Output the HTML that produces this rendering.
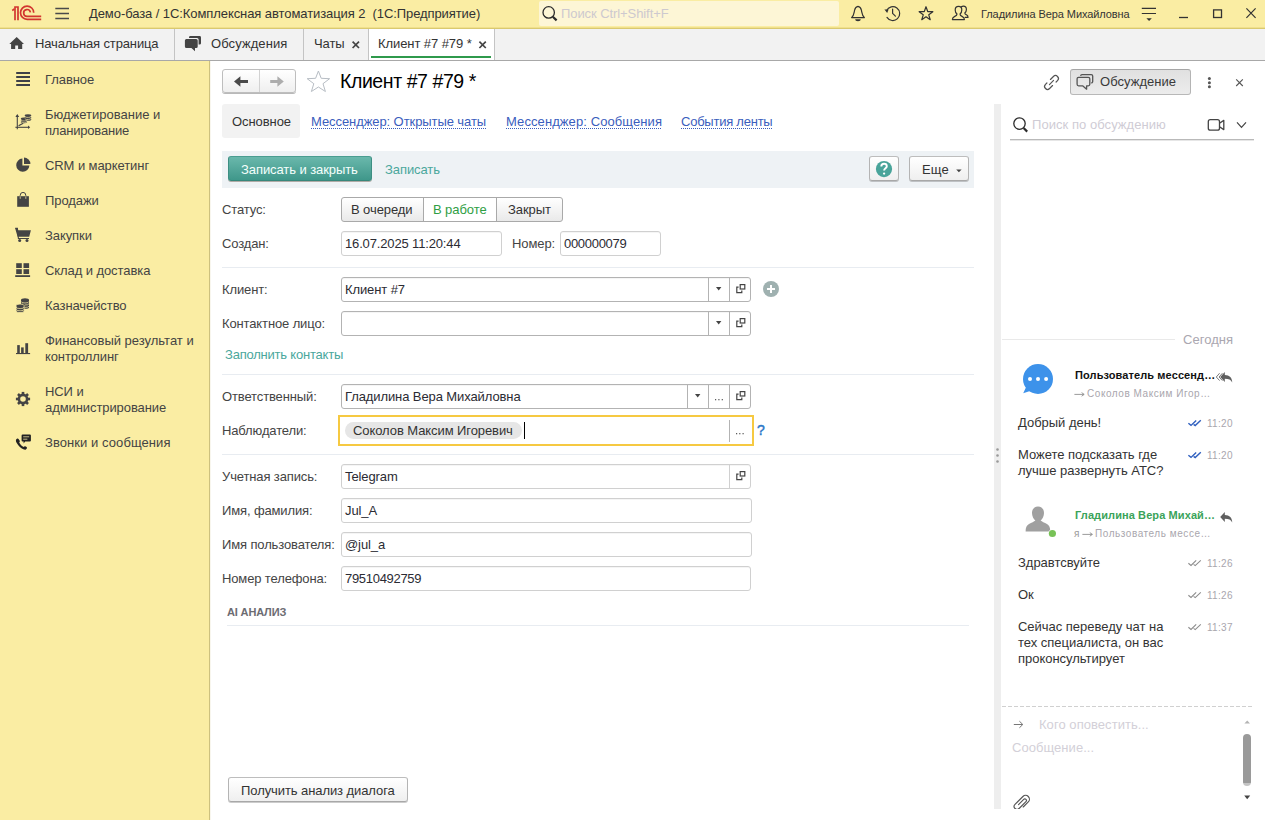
<!DOCTYPE html>
<html lang="ru">
<head>
<meta charset="utf-8">
<title>Клиент #7 #79 *</title>
<style>
*{box-sizing:border-box;margin:0;padding:0}
html,body{width:1265px;height:820px;overflow:hidden;background:#fff}
body{position:relative;font-family:"Liberation Sans",sans-serif;font-size:13px;color:#333;line-height:16px}
.abs{position:absolute}
.t{position:absolute;white-space:nowrap}
svg{position:absolute;overflow:visible}

/* ===== top bar ===== */
#topbar{left:0;top:0;width:1265px;height:29px;background:#faeda3;border-bottom:1px solid #d9c970;box-shadow:inset 0 -1px 0 #f0e08c}
#topsearch{left:539px;top:1px;width:300px;height:25px;background:#fdf6d6;border-radius:2px}
/* ===== tab bar ===== */
#tabbar{left:0;top:29px;width:1265px;height:32px;background:#f2f2f2;border-bottom:1px solid #a8a8a8}
.tsep{position:absolute;top:29px;width:1px;height:31px;background:#c4c4c4}
#acttab{left:369px;top:29px;width:125px;height:31px;background:#fff}
#actline{left:371px;top:56px;width:120px;height:2px;background:#2f9a4c}
/* ===== sidebar ===== */
#sidebar{left:0;top:61px;width:210px;height:759px;background:#faeda3;border-right:1px solid #cdc17e}
.sb{position:absolute;left:45px;white-space:nowrap;color:#444;font-size:13px;line-height:16px}

/* ===== main ===== */
body{letter-spacing:-0.08px}
#leftedge{left:210px;top:61px;width:1px;height:759px;background:#f8f6ee}
.btn{position:absolute;border:1px solid #b0b0b0;border-radius:3px;background:linear-gradient(#ffffff,#efefef);box-shadow:0 1px 0 rgba(0,0,0,.2);color:#333;text-align:center;white-space:nowrap}
.inp{position:absolute;height:25px;border:1px solid #b3b3b3;border-radius:3px;background:#fff;box-shadow:inset 0 1px 0 rgba(0,0,0,.04)}
.inp.ro{border-color:#d0d0d0}
.inp .v{position:absolute;left:3px;top:4px;white-space:nowrap;color:#2b2b33;letter-spacing:-0.1px}
.inp .d{position:absolute;top:0;width:1px;height:23px;background:#b3b3b3}
.lbl{position:absolute;left:222px;white-space:nowrap;color:#444;letter-spacing:-0.13px}
.hr{position:absolute;left:222px;width:752px;height:1px;background:#e8ecf1}
.nav{position:absolute;top:114px;white-space:nowrap;color:#3a5dbd;line-height:16px;text-decoration:underline dotted #3a5dbd;text-decoration-thickness:1px;text-underline-offset:1.5px}

/* ===== discussion panel ===== */
.p{position:absolute;white-space:nowrap;letter-spacing:0.05px}
.msg{position:absolute;left:1018px;color:#333;letter-spacing:-0.02px;line-height:16px;white-space:nowrap}
.tm{position:absolute;left:1207px;font-size:10px;color:#a9a6ad;white-space:nowrap;letter-spacing:0.3px;line-height:13px}
.sub{position:absolute;font-size:10px;color:#a9a6ad;white-space:nowrap;line-height:13px;letter-spacing:0.55px}
.nm{position:absolute;left:1075px;font-size:11px;font-weight:bold;white-space:nowrap;line-height:14px;letter-spacing:0.1px}
</style>
</head>
<body>

<!-- ================= TOP BAR ================= -->
<div class="abs" id="topbar"></div>
<div class="abs" id="topsearch"></div>
<div class="t" style="left:89px;top:6px;font-size:13px;color:#333;white-space:pre">Демо-база / 1С:Комплексная автоматизация 2  (1С:Предприятие)</div>
<div class="t" style="left:561px;top:6px;color:#cdc9cf">Поиск Ctrl+Shift+F</div>
<div class="t" style="left:981px;top:7px;font-size:11px;color:#333;line-height:14px">Гладилина Вера Михайловна</div>

<!-- ================= TAB BAR ================= -->
<div class="abs" id="tabbar"></div>
<div class="abs" id="acttab"></div>
<div class="abs" id="actline"></div>
<div class="tsep" style="left:174px"></div>
<div class="tsep" style="left:303px"></div>
<div class="tsep" style="left:368px"></div>
<div class="tsep" style="left:494px"></div>
<div class="t" style="left:35px;top:36px;color:#333;letter-spacing:-0.13px">Начальная страница</div>
<div class="t" style="left:211px;top:36px;color:#333;letter-spacing:0.08px">Обсуждения</div>
<div class="t" style="left:314px;top:36px;color:#333">Чаты</div>
<div class="t" style="left:378px;top:36px;color:#333">Клиент #7 #79 *</div>

<!-- ================= SIDEBAR ================= -->
<div class="abs" id="sidebar"></div>
<div class="sb" style="top:72px">Главное</div>
<div class="sb" style="top:107px;letter-spacing:0">Бюджетирование и<br><span style="letter-spacing:-0.2px">планирование</span></div>
<div class="sb" style="top:158px">CRM и маркетинг</div>
<div class="sb" style="top:193px">Продажи</div>
<div class="sb" style="top:228px">Закупки</div>
<div class="sb" style="top:263px">Склад и доставка</div>
<div class="sb" style="top:298px">Казначейство</div>
<div class="sb" style="top:333px;letter-spacing:-0.01px">Финансовый результат и<br><span style="letter-spacing:-0.1px">контроллинг</span></div>
<div class="sb" style="top:384px">НСИ и<br>администрирование</div>
<div class="sb" style="top:435px;letter-spacing:0.07px">Звонки и сообщения</div>

<!-- ================= MAIN FORM ================= -->
<div class="abs" id="leftedge"></div>
<!-- back/forward -->
<div class="btn" style="left:222px;top:69px;width:74px;height:24px;border-color:#bebebe;box-shadow:0 1px 0 #b9b9b9"></div>
<div class="abs" style="left:259px;top:70px;width:1px;height:22px;background:#d2d2d2"></div>
<div class="t" style="left:340px;top:70px;font-size:19.5px;line-height:22px;color:#000;letter-spacing:-0.42px">Клиент #7 #79 *</div>

<!-- section tabs -->
<div class="abs" style="left:222px;top:104px;width:78px;height:34px;background:#f2f2f2;border-radius:3px"></div>
<div class="t" style="left:232px;top:114px;color:#333">Основное</div>
<div class="nav" style="left:311px">Мессенджер: Открытые чаты</div>
<div class="nav" style="left:506px;letter-spacing:0.09px">Мессенджер: Сообщения</div>
<div class="nav" style="left:681px;letter-spacing:-0.24px">События ленты</div>

<!-- command bar -->
<div class="abs" style="left:222px;top:151px;width:752px;height:37px;background:#eef2f5"></div>
<div class="btn" style="left:228px;top:156px;width:144px;height:25px;border-color:#4a9d91 #3d8f83 #37877b;background:linear-gradient(#6ab8ac,#3f978a);box-shadow:0 1px 0 rgba(60,40,20,.35)"></div>
<div class="t" style="left:241px;top:162px;color:#f4fffc">Записать и закрыть</div>
<div class="t" style="left:385px;top:162px;color:#4aa79c">Записать</div>
<div class="btn" style="left:869px;top:156px;width:30px;height:25px;border-color:#bdbdbd #b4b4b4 #a8a8a8"></div>
<div class="btn" style="left:909px;top:156px;width:60px;height:25px;border-color:#bdbdbd #b4b4b4 #a8a8a8"></div>
<div class="t" style="left:922px;top:162px;color:#333;letter-spacing:0.1px">Еще</div>

<!-- status -->
<div class="lbl" style="top:202px">Статус:</div>
<div class="btn" style="left:341px;top:197px;width:222px;height:25px;border-color:#a9a9a9;box-shadow:none;background:linear-gradient(#ffffff,#e9e9e9)"></div>
<div class="abs" style="left:423px;top:198px;width:74px;height:23px;background:#fff;border-left:1px solid #a9a9a9;border-right:1px solid #a9a9a9"></div>
<div class="t" style="left:351px;top:202px;color:#333">В очереди</div>
<div class="t" style="left:433px;top:202px;color:#2f9e44">В работе</div>
<div class="t" style="left:508px;top:202px;color:#333">Закрыт</div>

<div class="lbl" style="top:236px">Создан:</div>
<div class="inp ro" style="left:341px;top:231px;width:161px"><span class="v" style="letter-spacing:-0.15px">16.07.2025 11:20:44</span></div>
<div class="t" style="left:512px;top:236px;color:#444">Номер:</div>
<div class="inp ro" style="left:560px;top:231px;width:101px"><span class="v" style="letter-spacing:-0.3px;left:3px">000000079</span></div>

<div class="hr" style="top:267px"></div>

<div class="lbl" style="top:282px">Клиент:</div>
<div class="inp" style="left:341px;top:277px;width:410px"><span class="v">Клиент #7</span><i class="d" style="left:366px"></i><i class="d" style="left:387px"></i></div>
<div class="lbl" style="top:316px">Контактное лицо:</div>
<div class="inp" style="left:341px;top:311px;width:410px"><i class="d" style="left:366px"></i><i class="d" style="left:387px"></i></div>
<div class="t" style="left:225px;top:347px;color:#4aa79c;letter-spacing:-0.21px">Заполнить контакты</div>

<div class="hr" style="top:374px"></div>

<div class="lbl" style="top:389px">Ответственный:</div>
<div class="inp" style="left:341px;top:384px;width:410px"><span class="v">Гладилина Вера Михайловна</span><i class="d" style="left:345px"></i><i class="d" style="left:366px"></i><i class="d" style="left:387px"></i></div>

<div class="lbl" style="top:423px">Наблюдатели:</div>
<div class="abs" style="left:338px;top:415px;width:416px;height:31px;border:2px solid #f6c941;background:#fff"></div>
<div class="abs" style="left:345px;top:422px;width:177px;height:17px;border-radius:9px;background:#e6e6e6"></div>
<div class="t" style="left:353px;top:423px;color:#333">Соколов Максим Игоревич</div>
<div class="abs" style="left:524px;top:422px;width:1px;height:17px;background:#000"></div>
<div class="abs" style="left:729px;top:420px;width:1px;height:22px;background:#b3b3b3"></div>
<div class="t" style="left:757px;top:422px;color:#2d78c8;font-size:14px;-webkit-text-stroke:0.45px #2d78c8">?</div>

<div class="hr" style="top:454px"></div>

<div class="lbl" style="top:469px">Учетная запись:</div>
<div class="inp ro" style="left:341px;top:464px;width:410px"><span class="v">Telegram</span><i class="d" style="left:387px;background:#d0d0d0"></i></div>
<div class="lbl" style="top:503px">Имя, фамилия:</div>
<div class="inp ro" style="left:341px;top:498px;width:411px"><span class="v">Jul_A</span></div>
<div class="lbl" style="top:537px">Имя пользователя:</div>
<div class="inp ro" style="left:341px;top:532px;width:411px"><span class="v">@jul_a</span></div>
<div class="lbl" style="top:571px">Номер телефона:</div>
<div class="inp ro" style="left:341px;top:566px;width:410px"><span class="v" style="letter-spacing:-0.3px">79510492759</span></div>

<div class="t" style="left:227px;top:604px;font-size:11px;font-weight:bold;color:#6c6c72;letter-spacing:-0.15px">AI АНАЛИЗ</div>
<div class="abs" style="left:227px;top:625px;width:742px;height:1px;background:#e8ecf1"></div>

<div class="btn" style="left:228px;top:777px;width:180px;height:25px;border-color:#bdbdbd #b4b4b4 #a8a8a8"></div>
<div class="t" style="left:241px;top:783px;color:#333">Получить анализ диалога</div>

<!-- splitter -->
<div class="abs" style="left:994px;top:104px;width:7px;height:705px;background:#eeeeee"></div>


<!-- ================= DISCUSSION PANEL ================= -->
<div class="btn" style="left:1070px;top:69px;width:121px;height:26px;background:linear-gradient(#e0e0e0,#ececec);border-color:#a6a6a6 #b4b4b4 #b8b8b8;box-shadow:none"></div>
<div class="t" style="left:1100px;top:74px;color:#3a3a3a;font-size:13px;letter-spacing:0.03px">Обсуждение</div>

<div class="p" style="left:1032px;top:117px;color:#cfccd5;font-size:13px">Поиск по обсуждению</div>
<div class="abs" style="left:1010px;top:139px;width:244px;height:1px;background:#b9b9b9;box-shadow:0 1px 0 #e6e6e6"></div>

<div class="abs" style="left:1002px;top:339px;width:173px;height:1px;background:#e9e9e9"></div>
<div class="p" style="left:1183px;top:332px;color:#aaa7b0">Сегодня</div>

<div class="nm" style="top:368px;color:#111">Пользователь мессенд…</div>
<div class="sub" style="top:387px;left:1087px">Соколов Максим Игор…</div>
<div class="msg" style="top:415px">Добрый день!</div>
<div class="tm" style="top:417px">11:20</div>
<div class="msg" style="top:447px">Можете подсказать где<br>лучше развернуть АТС?</div>
<div class="tm" style="top:449px">11:20</div>

<div class="nm" style="top:508px;color:#3aa35a">Гладилина Вера Михай…</div>
<div class="sub" style="top:527px;left:1074px;color:#9a9a9a">я</div><div class="sub" style="top:527px;left:1095px">Пользователь мессе…</div>
<div class="msg" style="top:555px">Здравтсвуйте</div>
<div class="tm" style="top:557px">11:26</div>
<div class="msg" style="top:587px">Ок</div>
<div class="tm" style="top:589px">11:26</div>
<div class="msg" style="top:619px">Сейчас переведу чат на<br>тех специалиста, он вас<br>проконсультирует</div>
<div class="tm" style="top:621px">11:37</div>

<div class="abs" style="left:1002px;top:706px;width:250px;height:1px;background:repeating-linear-gradient(90deg,#d0d0d0 0 4px,transparent 4px 6px)"></div>
<div class="p" style="left:1039px;top:717px;color:#d3d0d8">Кого оповестить...</div>
<div class="p" style="left:1012px;top:740px;color:#d3d0d8">Сообщение...</div>
<div class="abs" style="left:1243px;top:734px;width:8px;height:52px;border-radius:4px;background:linear-gradient(#9a9a9a 0,#9a9a9a 94%,#c4c4c4 94%)"></div>

<!-- ================= ICONS: top bar / tab bar / sidebar ================= -->
<svg id="ic1" style="left:0;top:0" width="1265" height="820" viewBox="0 0 1265 820" fill="none">
<!-- 1C logo -->
<g stroke="#d2362f" stroke-width="1.7" fill="none" stroke-linejoin="miter">
  <path d="M12.2 10.4 L14.4 9.1"/>
  <path d="M15 20.2 V7 H18 V20.2"/>
  <path d="M33.7 12.7 A6.6 6.6 0 1 0 27.2 19.3 H41.2"/>
  <path d="M30.4 12.3 A3.4 3.4 0 1 0 27.2 16.3 H41.2"/>
</g>
<!-- hamburger -->
<g stroke="#4a4a4a" stroke-width="1.3"><path d="M55.3 8.5H69M55.3 13.5H69M55.3 18.5H69"/></g>
<!-- search magnifier -->
<circle cx="548.7" cy="12.4" r="5.7" stroke="#2b2b2b" stroke-width="1.3"/>
<path d="M552.8 16.8 L556.6 20.4" stroke="#2b2b2b" stroke-width="2.2"/>
<!-- bell -->
<g stroke="#333" stroke-width="1.2" stroke-linejoin="round" stroke-linecap="round">
  <path d="M851.6 17.6 C854.2 15.2 854.0 12.6 854.6 10.2 C855.2 7.6 856.6 6.6 858 6.4 C859.4 6.6 860.8 7.6 861.4 10.2 C862 12.6 861.8 15.2 864.4 17.6 Z"/>
</g>
<path d="M855.2 19.3 H860.8 A2.8 1.9 0 0 1 855.2 19.3 Z" fill="#333"/>
<!-- history -->
<g stroke="#333" stroke-width="1.2" stroke-linecap="round" stroke-linejoin="round">
  <path d="M886.6 10.6 A6.9 6.9 0 1 1 887 17.4"/>
  <path d="M892.6 9 V13.4 L895.4 16.2"/>
</g>
<path d="M884.4 9.6 L888.6 9.4 L887.2 13 Z" fill="#333"/>
<!-- star -->
<path d="M926 6.7 L927.7 11.55 L932.85 11.68 L928.76 14.8 L930.23 19.72 L926 16.8 L921.77 19.72 L923.24 14.8 L919.15 11.68 L924.3 11.55 Z" stroke="#333" stroke-width="1.2" stroke-linejoin="round"/>
<!-- users -->
<g stroke="#333" stroke-width="1.2" stroke-linejoin="round" stroke-linecap="round">
  <path d="M958.6 6.4 C956.4 6.4 955.2 8 955.2 10 C955.2 11.8 956 13.2 957 14 C957.2 15.4 955.8 16 954.4 16.6 C953 17.2 952.4 18 952.4 19.6 H964.4 C964.4 18 963.8 17.2 962.4 16.6 C961 16 959.8 15.4 960 14 C961 13.2 961.8 11.8 961.8 10 C961.8 8 960.8 6.4 958.6 6.4 Z"/>
  <path d="M961.4 6.8 C962 6.3 962.8 6.2 963.4 6.2 C965.4 6.2 966.4 7.6 966.4 9.4 C966.4 11 965.8 12.2 964.8 13 C964.8 14.2 965.8 14.6 966.8 15 C967.6 15.4 968 16.2 968 17.4 H965.2"/>
</g>
<!-- menu lines + caret -->
<g stroke="#333" stroke-width="1.2"><path d="M1141.8 8.4H1156M1141.8 13.5H1156"/></g>
<path d="M1146.4 18.2 H1151.8 L1149.1 21 Z" fill="#333"/>
<!-- window controls -->
<path d="M1179 17.5 H1188" stroke="#333" stroke-width="1.3"/>
<rect x="1213.6" y="9.9" width="7.9" height="7.6" stroke="#333" stroke-width="1.3"/>
<path d="M1246.4 8.4 L1255.6 17.8 M1255.6 8.4 L1246.4 17.8" stroke="#333" stroke-width="1.2"/>

<!-- home -->
<path d="M16.7 37 L24 43.9 H22.2 V48.9 H18.1 V45.4 H15.2 V48.9 H11.1 V43.9 H9.3 Z" fill="#444"/>
<!-- discussions -->
<path d="M190.4 36 H199.6 A1.4 1.4 0 0 1 201 37.4 V43.2 A1.4 1.4 0 0 1 199.6 44.6 H198.6 V39.6 A1.6 1.6 0 0 0 197 38 H189 V37.4 A1.4 1.4 0 0 1 190.4 36 Z" fill="#444"/>
<path d="M186.4 39.1 H196.2 A1.5 1.5 0 0 1 197.7 40.6 V46.4 A1.5 1.5 0 0 1 196.2 47.9 H195 V51.3 L191.4 47.9 H186.4 A1.5 1.5 0 0 1 184.9 46.4 V40.6 A1.5 1.5 0 0 1 186.4 39.1 Z" fill="#444"/>
<!-- tab close marks -->
<g stroke="#444" stroke-width="1.7"><path d="M352.6 41.6 L359 48 M359 41.6 L352.6 48"/><path d="M479.4 41.6 L485.8 48 M485.8 41.6 L479.4 48"/></g>

<!-- sidebar: main (4 lines) -->
<g stroke="#3e4048" stroke-width="1.9"><path d="M16.2 73H30M16.2 77H30M16.2 81H30M16.2 85H30"/></g>
<!-- sidebar: budgeting -->
<g stroke="#444" stroke-width="1.1" fill="none">
  <path d="M17.3 129.2 V115.2"/><path d="M15.4 127.3 H28.6"/>
  <path d="M18.6 125.8 L23.2 123.2" stroke-width="1.3"/>
</g>
<path d="M15.4 117 L17.3 114 L19.2 117 Z M28 125.5 L30.2 127.3 L28 129.1 Z" fill="#444"/>
<g fill="#444"><ellipse cx="28" cy="115.500" rx="3.300" ry="1.300"/><ellipse cx="28" cy="117.500" rx="3.300" ry="1.300"/><ellipse cx="28" cy="119.400" rx="3.300" ry="1.300"/>
<ellipse cx="24" cy="118.800" rx="3.200" ry="1.200"/><ellipse cx="24" cy="120.600" rx="3.200" ry="1.200"/><ellipse cx="24" cy="122.200" rx="3.200" ry="1.100"/></g>
<g stroke="#faeda3" stroke-width="0.600" fill="none"><path d="M24.800 116.700 A3.300 1.300 0 0 0 31.200 116.200"/><path d="M24.800 118.700 A3.300 1.300 0 0 0 31.200 118.200"/><path d="M20.800 120 A3.200 1.200 0 0 0 27.200 119.500"/><path d="M20.800 121.700 A3.200 1.200 0 0 0 27.200 121.200"/></g>
<!-- sidebar: CRM pie -->
<path d="M22.4 158.6 A6.6 6.6 0 1 0 29.4 165.6 H22.4 Z" fill="#444"/>
<path d="M24 157.6 V164 H30.4 A6.4 6.4 0 0 0 24 157.6 Z" fill="#444"/>
<!-- sidebar: sales bag -->
<rect x="17.2" y="196.2" width="11.7" height="10.6" fill="#444"/>
<path d="M20.2 198.6 V195.4 A2.8 3 0 0 1 25.8 195.4 V198.6" stroke="#444" stroke-width="1" fill="none"/>
<path d="M20.2 198.8 V196.3 M25.8 198.8 V196.3" stroke="#d8cf9a" stroke-width="0.9"/>
<!-- sidebar: purchases cart -->
<path d="M15.2 228.4 H17.6 L18.2 230.2 H30.9 L29.2 236.7 H17.6 Z" fill="#444"/>
<path d="M15.2 228.4 H17.4 L18.4 238.5 H29" stroke="#444" stroke-width="1.1" fill="none"/>
<circle cx="19.7" cy="240.5" r="1.5" fill="#444"/><circle cx="27" cy="240.5" r="1.5" fill="#444"/>
<!-- sidebar: warehouse grid -->
<g fill="#444"><rect x="16.2" y="263.2" width="5.6" height="4.8"/><rect x="23.5" y="263.2" width="5.6" height="4.8"/><rect x="16.2" y="269.2" width="5.6" height="4.8"/><rect x="23.5" y="269.2" width="5.6" height="4.8"/><rect x="15.2" y="275.2" width="14.9" height="1.8"/></g>
<!-- sidebar: treasury coins -->
<g fill="#444">
 <path d="M21 299.8 A4 1.6 0 0 1 29 299.8 V307.2 A4 1.6 0 0 1 21 307.2 Z"/>
 <path d="M16.1 305.6 A4 1.6 0 0 1 24.1 305.6 V311 A4 1.6 0 0 1 16.1 311 Z" stroke="#faeda3" stroke-width="0.8"/>
</g>
<g stroke="#faeda3" stroke-width="0.7" fill="none"><path d="M21 301.4 A4 1.6 0 0 0 29 301.4"/><path d="M24.6 305 A4 1.6 0 0 0 29 303.8"/><path d="M24.6 307.4 A4 1.6 0 0 0 29 306.2"/><path d="M16.1 307 A4 1.6 0 0 0 24.1 307"/><path d="M16.1 309.2 A4 1.6 0 0 0 24.1 309.2"/></g>
<!-- sidebar: finance bars -->
<g fill="#444"><rect x="17.2" y="345.1" width="2.6" height="8.4"/><rect x="21.1" y="347.4" width="2.6" height="6.1"/><rect x="25.3" y="343.2" width="2.8" height="10.3"/><rect x="16" y="353" width="14.1" height="1.1"/></g>
<!-- sidebar: gear -->
<g transform="translate(23 399)">
 <circle r="4.1" stroke="#444" stroke-width="2.6" fill="none"/>
 <g fill="#444"><rect x="-1.3" y="-7.1" width="2.6" height="2.6"/><rect x="-1.3" y="4.5" width="2.6" height="2.6"/><rect x="-7.1" y="-1.3" width="2.6" height="2.6"/><rect x="4.5" y="-1.3" width="2.6" height="2.6"/>
 <g transform="rotate(45)"><rect x="-1.3" y="-7.1" width="2.6" height="2.6"/><rect x="-1.3" y="4.5" width="2.6" height="2.6"/><rect x="-7.1" y="-1.3" width="2.6" height="2.6"/><rect x="4.5" y="-1.3" width="2.6" height="2.6"/></g></g>
</g>
<!-- sidebar: calls & messages -->
<path d="M17.2 438.6 C15.6 439.4 15.6 441 16.6 442.8 C18.4 446 21 448.4 24 449.6 C25.4 450.1 26.4 449.4 27 448 C27.2 447.4 26.6 446.8 25.6 446.4 C24.8 446.1 24.2 446.2 23.8 446.9 C22 446.2 20 444.2 19.2 442.4 C19.9 442 20 441.4 19.6 440.6 C19.2 439.6 18.2 438.2 17.2 438.6 Z" fill="#222"/>
<path d="M22.6 434.4 H29.9 A1 1 0 0 1 30.9 435.4 V440.5 A1 1 0 0 1 29.9 441.5 H25.2 L23.6 443.4 V441.5 H22.6 A1 1 0 0 1 21.6 440.5 V435.4 A1 1 0 0 1 22.6 434.4 Z" fill="#222"/>
<path d="M23.2 436.8 H29.2 M23.2 439.2 H27.4" stroke="#d9cf96" stroke-width="0.9"/>
</svg>

<!-- ================= ICONS: main form ================= -->
<svg id="ic2" style="left:0;top:0" width="1265" height="820" viewBox="0 0 1265 820" fill="none">
<!-- back / forward arrows -->
<path d="M234 81.5 L240.4 76.3 V80 H248 V83 H240.4 V86.7 Z" fill="#4a4a4a"/>
<path d="M283.8 81.5 L277.4 76.3 V80 H270.2 V83 H277.4 V86.7 Z" fill="#adadad"/>
<!-- favorite star -->
<path d="M318.4 71 L321.2 78.3 L329.6 78.7 L323 83.7 L325.4 91.5 L318.4 87 L311.4 91.5 L313.8 83.7 L307.2 78.7 L315.6 78.3 Z" stroke="#b7bdc4" stroke-width="1" stroke-linejoin="miter"/>
<!-- help -->
<circle cx="884" cy="169.1" r="8.1" fill="#49a49a"/>
<path d="M881.3 166.4 C881.3 164.6 882.5 163.8 884 163.8 C885.6 163.8 886.8 164.7 886.8 166.2 C886.8 168.2 884.1 168.3 884.1 170.6" stroke="#fff" stroke-width="1.9" fill="none"/>
<circle cx="884.1" cy="173.6" r="1.15" fill="#fff"/>
<!-- more caret -->
<path d="M956.2 169.6 H961.6 L958.9 172.2 Z" fill="#444"/>
<!-- dropdown carets -->
<g fill="#444">
<path d="M716 287 H721.4 L718.7 290.4 Z"/>
<path d="M716 321 H721.4 L718.7 324.4 Z"/>
<path d="M695 394 H700.4 L697.7 397.4 Z"/>
</g>
<!-- open icons -->
<g stroke="#444" stroke-width="1.2" fill="none">
<g id="op"><rect x="740.2" y="284.6" width="4.6" height="4.4"/><path d="M738.6 287.2 H736.8 V292.6 H741.8 V290.6"/></g>
<use href="#op" y="34"/><use href="#op" y="107"/><use href="#op" y="187"/>
</g>
<!-- ellipsis dots -->
<g fill="#5c5c5c"><rect x="715" y="399" width="1.200" height="1.300"/><rect x="718.300" y="399" width="1.200" height="1.300"/><rect x="721.700" y="399" width="1.200" height="1.300"/>
<rect x="736" y="433" width="1.200" height="1.300"/><rect x="739.200" y="433" width="1.200" height="1.300"/><rect x="742.500" y="433" width="1.200" height="1.300"/></g>
<!-- add client -->
<circle cx="771" cy="289" r="8" fill="#9fb1b0"/>
<path d="M767 289 H775 M771 285 V293" stroke="#fff" stroke-width="2"/>
<!-- splitter dots -->
<g fill="#999"><circle cx="997.5" cy="449.5" r="1.3"/><circle cx="997.5" cy="455.5" r="1.3"/><circle cx="997.5" cy="461.5" r="1.3"/></g>
</svg>

<!-- ================= ICONS: discussion panel ================= -->
<svg id="ic3" style="left:0;top:0" width="1265" height="820" viewBox="0 0 1265 820" fill="none">
<!-- link -->
<g transform="translate(1051.5 82.5) rotate(-45)" stroke="#555" stroke-width="1.2" stroke-linecap="round">
  <path d="M1.4 -2.9 H5.6 A2.9 2.9 0 0 1 5.6 2.9 H3.6"/>
  <path d="M-1.4 2.9 H-5.6 A2.9 2.9 0 0 1 -5.6 -2.9 H-3.6"/>
  <path d="M-2.9 0 H2.9"/>
</g>
<!-- discussion button icon -->
<g stroke="#555" stroke-width="1.3" stroke-linejoin="round">
  <path d="M1080.6 75.8 A1.4 1.4 0 0 1 1082 74.6 H1091.2 A1.5 1.5 0 0 1 1092.7 76.1 V81.4 A1.5 1.5 0 0 1 1091.2 82.9"/>
  <path d="M1078.6 77.3 H1088.3 A1.5 1.5 0 0 1 1089.8 78.8 V84.3 A1.5 1.5 0 0 1 1088.3 85.8 H1086.6 V89.2 L1082.6 85.8 H1078.6 A1.5 1.5 0 0 1 1077.1 84.3 V78.8 A1.5 1.5 0 0 1 1078.6 77.3 Z"/>
</g>
<!-- kebab -->
<g fill="#555"><circle cx="1209.4" cy="78.6" r="1.5"/><circle cx="1209.4" cy="82.7" r="1.5"/><circle cx="1209.4" cy="86.8" r="1.5"/></g>
<!-- close -->
<path d="M1236.2 79.4 L1242.8 86 M1242.8 79.4 L1236.2 86" stroke="#555" stroke-width="1.1"/>
<!-- panel search magnifier -->
<circle cx="1019.5" cy="123.6" r="5.7" stroke="#2b2b2b" stroke-width="1.3"/>
<path d="M1023.6 128 L1027.2 131.6" stroke="#2b2b2b" stroke-width="2.2"/>
<!-- video -->
<g stroke="#444" stroke-width="1.3" stroke-linejoin="round">
  <rect x="1208.3" y="119.7" width="11.2" height="10.5" rx="2"/>
  <path d="M1219.5 123.2 L1223.8 120.4 V129.6 L1219.5 126.8"/>
</g>
<!-- chevron -->
<path d="M1237 122.4 L1241.5 127.4 L1246 122.4" stroke="#444" stroke-width="1.2"/>

<!-- avatar: messenger user -->
<circle cx="1038" cy="379" r="15" fill="#3d92ea"/>
<path d="M1026.4 386.5 L1023.2 393.2 L1031.6 390.6 Z" fill="#3d92ea"/>
<g fill="#fff"><circle cx="1030" cy="379.1" r="2"/><circle cx="1038" cy="379.1" r="2"/><circle cx="1046.1" cy="379.1" r="2"/></g>
<!-- avatar: person -->
<path d="M1038 506.4 C1042 506.4 1044 509.4 1044 513 C1044 516.4 1042.4 518.8 1040.6 520.6 C1042 521.8 1044.4 522.6 1047 524 C1049.4 525.4 1050.2 527.6 1050.2 531.4 H1025.6 C1025.6 527.6 1026.6 525.4 1029 524 C1031.6 522.6 1034 521.8 1035.4 520.6 C1033.600 518.8 1032 516.4 1032 513 C1032 509.400 1034 506.400 1038 506.400 Z" fill="#a0a0a0"/>
<circle cx="1052.4" cy="533.5" r="4.2" fill="#fff"/>
<circle cx="1052.4" cy="533.5" r="3.6" fill="#78c257"/>

<!-- reply all -->
<g stroke="#6a6a6a" stroke-width="0.9"><path d="M1219.6 373.2 L1216.300 377 L1219.6 380.6"/><path d="M1222.400 373.200 L1219.100 377 L1222.400 380.600"/></g>
<path id="rp" d="M1220.200 376.900 L1224.800 371.900 V375 C1229.600 375 1232.200 378 1232.200 382.400 C1231 379.800 1228.800 378.800 1224.800 378.800 V382 Z" fill="#5f5f5f"/>
<use href="#rp" y="140"/>

<!-- read marks -->
<g stroke="#2f5fbf" stroke-width="1.4" fill="none">
  <g id="ck"><path d="M1188.400 423.300 L1191 425.400 L1196.200 420.400"/><path d="M1193.600 424.400 L1195.200 425.600 L1200.800 420.300"/></g>
  <use href="#ck" y="32"/>
</g>
<g stroke="#8c8c8c" stroke-width="1.1" fill="none"><use href="#ck" y="140"/><use href="#ck" y="172"/><use href="#ck" y="204"/></g>

<!-- sub arrows -->
<g stroke="#8e8e8e" stroke-width="0.9" fill="none"><path d="M1074.400 394.400 H1084 M1081.600 392.600 L1084.200 394.400 L1081.600 396.200"/><path d="M1082.400 534.400 H1092.200 M1089.800 532.600 L1092.400 534.400 L1089.800 536.200"/></g>
<!-- notify arrow -->
<path d="M1013.800 724.500 H1022.600 M1019.400 721.200 L1022.800 724.500 L1019.400 727.800" stroke="#777" stroke-width="1"/>
<!-- scrollbar arrows -->
<path d="M1244.400 723.600 H1250 L1247.200 720.400 Z" fill="#b4b4b4"/>
<path d="M1244.200 795.600 H1250.200 L1247.200 799.200 Z" fill="#444"/>
<!-- paperclip -->
<clipPath id="cpclip"><rect x="1005" y="790" width="40" height="19"/></clipPath>
<g clip-path="url(#cpclip)"><g transform="translate(1022 802.800) rotate(-45)" stroke="#555" stroke-width="1.150" stroke-linecap="round">
  <path d="M-2.100 3.800 L5.100 3.800 A3.800 3.800 0 0 0 5.100 -3.800 L-6.100 -3.800 A2.900 2.900 0 0 0 -6.100 2 L3.600 2 A1.600 1.600 0 0 0 3.600 -1.200 L-3.700 -1.200"/>
</g></g>
</svg>


</body>
</html>
